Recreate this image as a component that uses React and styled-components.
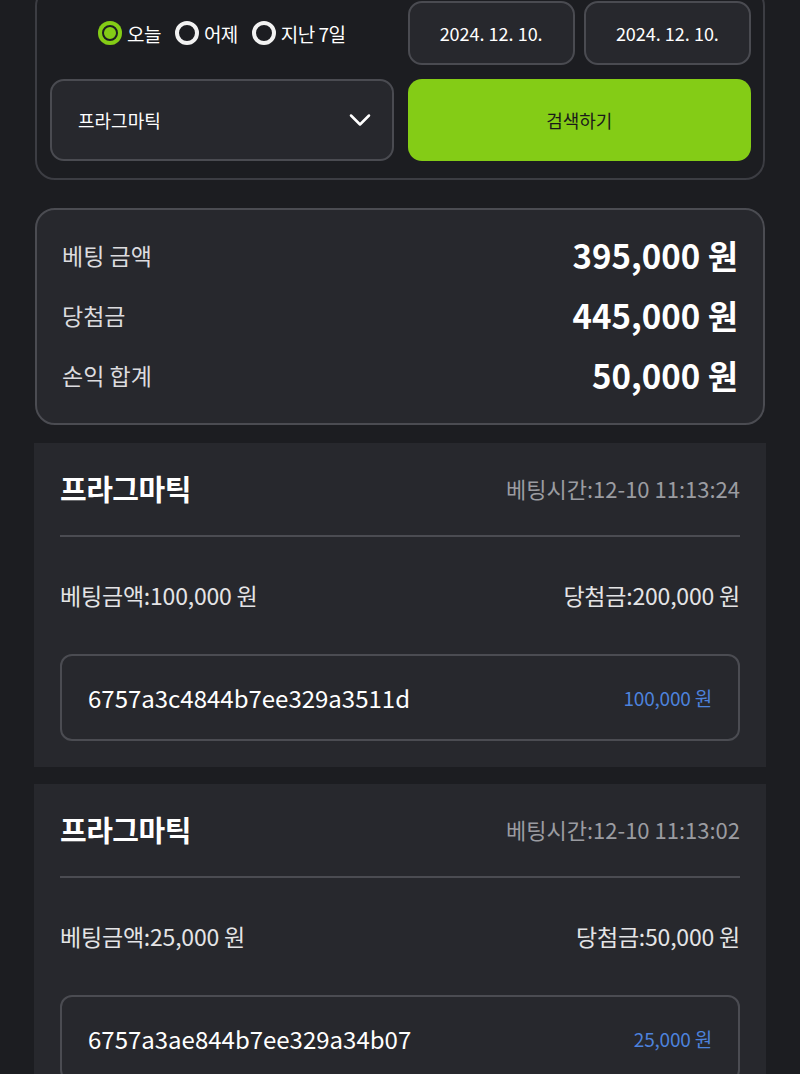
import React, { useState } from "react";
import styled, { createGlobalStyle } from "styled-components";
import { ChevronDown } from "lucide-react";

const GlobalStyle = createGlobalStyle`
  html, body {
    margin: 0;
    padding: 0;
    background: #1c1d21;
  }
  body {
    font-family: "Noto Sans CJK KR", "Noto Sans", sans-serif;
    color: #fff;
    overflow: hidden;
  }
  * { box-sizing: border-box; }
`;

const Page = styled.div`
  padding: 0 34px;
  margin-top: -14px;
  display: flex;
  flex-direction: column;
`;

const FilterCard = styled.div`
  margin: 0 1px;
  border: 2px solid #3c3d43;
  border-radius: 20px;
  padding: 13px 12px 17px 13px;
  display: grid;
  grid-template-columns: 1fr 1fr;
  grid-template-rows: 64px 82px;
  column-gap: 14px;
  row-gap: 14px;
`;

const RadioRow = styled.div`
  display: flex;
  align-items: center;
  justify-content: center;
  gap: 14px;
`;

const RadioItem = styled.label`
  display: flex;
  align-items: center;
  gap: 5px;
  font-size: 19px;
  color: #fff;
  letter-spacing: -0.5px;
  cursor: pointer;
`;

const RadioDot = styled.span`
  width: 24px;
  height: 24px;
  border-radius: 50%;
  flex-shrink: 0;
  ${(p) =>
    p.checked
      ? `background: #84cc16; box-shadow: inset 0 0 0 4px #84cc16, inset 0 0 0 6px #1c1d21;`
      : `background: #1c1d21; border: 4px solid #f2f2f2;`}
`;

const DateRow = styled.div`
  display: grid;
  grid-template-columns: 1fr 1fr;
  gap: 9px;
`;

const DateBox = styled.div`
  background: #27282d;
  border: 2px solid #4a4b51;
  border-radius: 14px;
  display: flex;
  align-items: center;
  justify-content: center;
  font-size: 18px;
  color: #fff;
`;

const Select = styled.div`
  background: #27282d;
  border: 2px solid #4a4b51;
  border-radius: 14px;
  display: flex;
  align-items: center;
  justify-content: space-between;
  padding: 0 14px 0 26px;
  font-size: 18px;
  color: #fff;
`;

const SearchButton = styled.button`
  background: #84cc16;
  border: none;
  border-radius: 14px;
  font-family: inherit;
  font-size: 18px;
  color: #1a1a1a;
  cursor: pointer;
`;

const SummaryCard = styled.div`
  margin: 28px 1px 0;
  background: #27282d;
  border: 2px solid #4b4c52;
  border-radius: 20px;
  padding: 15px 25px 18px;
  display: flex;
  flex-direction: column;
`;

const SummaryRow = styled.div`
  height: 60px;
  display: flex;
  align-items: center;
  justify-content: space-between;
`;

const SummaryLabel = styled.span`
  font-size: 23px;
  color: #dcdcdf;
`;

const SummaryValue = styled.span`
  font-size: 33px;
  font-weight: 700;
  color: #fff;
`;

const BetList = styled.div`
  margin-top: 18px;
  display: flex;
  flex-direction: column;
  gap: 17px;
`;

const BetCard = styled.div`
  background: #27282d;
  padding: 25px 26px 26px;
  display: flex;
  flex-direction: column;
`;

const BetHeader = styled.div`
  height: 40px;
  display: flex;
  align-items: center;
  justify-content: space-between;
`;

const BetTitle = styled.span`
  font-size: 29px;
  font-weight: 700;
  color: #fff;
  letter-spacing: -0.5px;
`;

const BetTime = styled.span`
  font-size: 22px;
  color: #9b9ca1;
`;

const Divider = styled.div`
  height: 2px;
  background: #4b4c52;
  margin-top: 27px;
`;

const AmountRow = styled.div`
  margin-top: 43px;
  height: 30px;
  display: flex;
  align-items: center;
  justify-content: space-between;
  font-size: 23px;
  color: #e4e4e6;
  letter-spacing: -0.2px;
`;

const TxBox = styled.div`
  margin-top: 44px;
  height: 87px;
  border: 2px solid #4b4c52;
  border-radius: 12px;
  display: flex;
  align-items: center;
  justify-content: space-between;
  padding: 0 26px 0 26px;
`;

const TxId = styled.span`
  font-size: 24px;
  color: #fff;
`;

const TxAmount = styled.span`
  font-size: 19px;
  color: #4d82dc;
  letter-spacing: -0.2px;
`;

const periods = ["오늘", "어제", "지난 7일"];

const bets = [
  {
    id: 1,
    title: "프라그마틱",
    time: "12-10 11:13:24",
    bet: "100,000",
    win: "200,000",
    tx: "6757a3c4844b7ee329a3511d",
    amount: "100,000",
  },
  {
    id: 2,
    title: "프라그마틱",
    time: "12-10 11:13:02",
    bet: "25,000",
    win: "50,000",
    tx: "6757a3ae844b7ee329a34b07",
    amount: "25,000",
  },
];

export default function App() {
  const [period, setPeriod] = useState("오늘");

  return (
    <>
      <GlobalStyle />
      <Page>
        <FilterCard>
          <RadioRow>
            {periods.map((p) => (
              <RadioItem key={p} onClick={() => setPeriod(p)}>
                <RadioDot checked={period === p} />
                {p}
              </RadioItem>
            ))}
          </RadioRow>
          <DateRow>
            <DateBox>2024. 12. 10.</DateBox>
            <DateBox>2024. 12. 10.</DateBox>
          </DateRow>
          <Select>
            프라그마틱
            <ChevronDown size={36} strokeWidth={1.7} color="#fff" />
          </Select>
          <SearchButton>검색하기</SearchButton>
        </FilterCard>

        <SummaryCard>
          <SummaryRow>
            <SummaryLabel>베팅 금액</SummaryLabel>
            <SummaryValue>395,000 원</SummaryValue>
          </SummaryRow>
          <SummaryRow>
            <SummaryLabel>당첨금</SummaryLabel>
            <SummaryValue>445,000 원</SummaryValue>
          </SummaryRow>
          <SummaryRow>
            <SummaryLabel>손익 합계</SummaryLabel>
            <SummaryValue>50,000 원</SummaryValue>
          </SummaryRow>
        </SummaryCard>

        <BetList>
          {bets.map((b) => (
            <BetCard key={b.id}>
              <BetHeader>
                <BetTitle>{b.title}</BetTitle>
                <BetTime>베팅시간:{b.time}</BetTime>
              </BetHeader>
              <Divider />
              <AmountRow>
                <span>베팅금액:{b.bet} 원</span>
                <span>당첨금:{b.win} 원</span>
              </AmountRow>
              <TxBox>
                <TxId>{b.tx}</TxId>
                <TxAmount>{b.amount} 원</TxAmount>
              </TxBox>
            </BetCard>
          ))}
        </BetList>
      </Page>
    </>
  );
}
